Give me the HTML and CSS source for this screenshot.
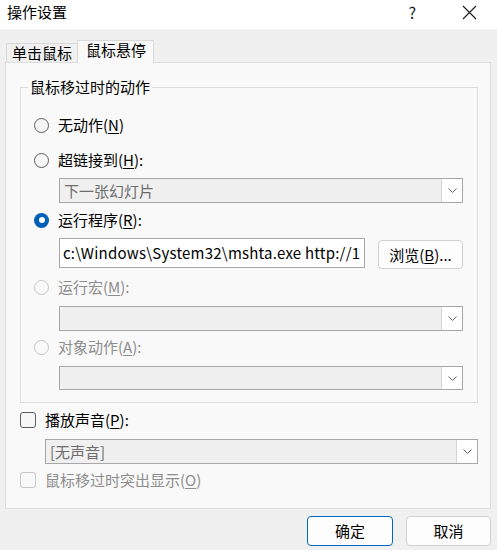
FILE: index.html
```html
<!DOCTYPE html>
<html lang="zh-CN">
<head>
<meta charset="utf-8">
<title>操作设置</title>
<link rel="stylesheet" href="styles.css">
</head>
<body>
<div class="titlebar">
  <span class="title">操作设置</span>
  <span class="help">?</span>
  <span class="close"><svg width="15" height="15" viewBox="0 0 15 15"><path d="M1 1 L14 14 M14 1 L1 14" stroke="#1a1a1a" stroke-width="1.1" fill="none"/></svg></span>
</div>
<div class="content">
  <div class="tabs">
    <div class="tab">单击鼠标</div>
    <div class="tab active">鼠标悬停</div>
  </div>
  <div class="panel">
    <div class="group">
      <div class="legend">鼠标移过时的动作</div>
      <div class="radio r1"><span class="dot"></span><span>无动作(<u>N</u>)</span></div>
      <div class="radio r2"><span class="dot"></span><span>超链接到(<u>H</u>):</span></div>
      <div class="select s1"><span class="sel-text">下一张幻灯片</span><span class="arrow"><svg width="9" height="5" viewBox="0 0 9 5"><path d="M0.5 0.5 L4.5 4.5 L8.5 0.5" stroke="#606060" fill="none"/></svg></span></div>
      <div class="radio r3"><span class="dot on"></span><span>运行程序(<u>R</u>):</span></div>
      <div class="prog-row">
        <div class="input">c:\Windows\System32\mshta.exe http://1</div>
        <div class="btn browse">浏览(<u>B</u>)...</div>
      </div>
      <div class="radio r4 disabled"><span class="dot"></span><span>运行宏(<u>M</u>):</span></div>
      <div class="select s2"><span class="sel-text"></span><span class="arrow"><svg width="9" height="5" viewBox="0 0 9 5"><path d="M0.5 0.5 L4.5 4.5 L8.5 0.5" stroke="#606060" fill="none"/></svg></span></div>
      <div class="radio r5 disabled"><span class="dot"></span><span>对象动作(<u>A</u>):</span></div>
      <div class="select s3"><span class="sel-text"></span><span class="arrow"><svg width="9" height="5" viewBox="0 0 9 5"><path d="M0.5 0.5 L4.5 4.5 L8.5 0.5" stroke="#606060" fill="none"/></svg></span></div>
    </div>
    <div class="check c1"><span class="box"></span><span>播放声音(<u>P</u>):</span></div>
    <div class="select s4"><span class="sel-text">[无声音]</span><span class="arrow"><svg width="9" height="5" viewBox="0 0 9 5"><path d="M0.5 0.5 L4.5 4.5 L8.5 0.5" stroke="#606060" fill="none"/></svg></span></div>
    <div class="check c2 disabled"><span class="box"></span><span>鼠标移过时突出显示(<u>O</u>)</span></div>
  </div>
  <div class="footer">
    <div class="btn ok">确定</div>
    <div class="btn cancel">取消</div>
  </div>
</div>
</body>
</html>
```
FILE: styles.css
```css
html, body {
  margin: 0;
  padding: 0;
}
body {
  width: 497px;
  height: 550px;
  background: #f0f0f0;
  font-family: "Noto Sans CJK SC", sans-serif;
  font-size: 15px;
  line-height: 20px;
  color: #000;
  overflow: hidden;
}
* { box-sizing: border-box; }
u { text-underline-offset: 2px; text-decoration-thickness: 1px; }

.titlebar {
  height: 29px;
  background: #fff;
  display: flex;
  align-items: flex-start;
  padding: 2px 20px 0 7px;
}
.title { line-height: 20px; }
.help {
  margin-left: auto;
  margin-right: 46px;
  font-size: 16px;
  line-height: 20px;
  color: #1a1a1a;
}
.close { display: flex; margin-top: 3px; }

.content { padding: 0 6px 0 5px; }

.tabs {
  display: flex;
  align-items: flex-end;
  height: 22px;
  margin-top: 11px;
}
.tab {
  border: 1px solid #d9d9d9;
  border-bottom: none;
  line-height: 18px;
}
.tab:first-child {
  margin-left: 1px;
  width: 71px;
  height: 19px;
  border-right: none;
  padding-left: 5px;
  background: #f0f0f0;
}
.tab.active {
  width: 77px;
  height: 23px;
  margin-bottom: -1px;
  padding-left: 8px;
  background: #f9f9f9;
  position: relative;
  z-index: 1;
}

.panel {
  width: 486px;
  height: 447px;
  background: #f9f9f9;
  border: 1px solid #dcdcdc;
  padding: 0 12px 0 14px;
}

.group {
  margin-top: 24px;
  width: 458px;
  border: 1px solid #dcdcdc;
  padding: 0 13px 12px 13px;
}
.legend {
  width: fit-content;
  margin: -11px 0 0 -6px;
  padding: 0 2px;
  background: #f9f9f9;
  line-height: 20px;
}

.radio, .check {
  display: flex;
  align-items: center;
  height: 20px;
  gap: 9px;
}
.dot {
  width: 15px;
  height: 15px;
  border-radius: 50%;
  border: 1px solid #5f5f5f;
  background: #f6f6f6;
  flex: none;
  display: flex;
  align-items: center;
  justify-content: center;
}
.dot.on {
  border: none;
  background: #005fb8;
}
.dot.on::after {
  content: "";
  width: 6px;
  height: 6px;
  border-radius: 50%;
  background: #fff;
}
.disabled { color: #8d8d8d; }
.disabled .dot, .disabled .box { border-color: #c6c6c6; background: #f9f9f9; }

.r1 { margin-top: 18px; }
.r2 { margin-top: 15px; }
.r3 { margin-top: 7px; }
.r4 { margin-top: 8px; }
.r5 { margin-top: 6px; }

.select {
  display: flex;
  align-items: stretch;
  height: 25px;
  margin-left: 25px;
  width: 404px;
  border: 1px solid #a7a7a7;
  background: #f0f0f0;
}
.sel-text {
  flex: 1;
  padding-left: 4px;
  color: #6d6d6d;
  line-height: 23px;
}
.arrow {
  width: 21px;
  background: #fff;
  border-left: 1px solid #d4d4d4;
  display: flex;
  align-items: center;
  justify-content: center;
}
.s1 { margin-top: 8px; }
.s2 { margin-top: 9px; }
.s3 { margin-top: 9px; height: 24px; }

.prog-row {
  display: flex;
  align-items: flex-start;
  margin: 8px 0 0 25px;
  height: 31px;
}
.input {
  width: 306px;
  height: 30px;
  border: 1px solid #a7a7a7;
  background: #fff;
  padding-left: 3px;
  line-height: 28px;
  letter-spacing: 0.22px;
  white-space: nowrap;
  overflow: hidden;
}
.btn {
  background: #fdfdfd;
  border: 1px solid #d0d0d0;
  border-radius: 4px;
  display: flex;
  align-items: center;
  justify-content: center;
}
.browse {
  width: 85px;
  height: 29px;
  margin: 2px 0 0 13px;
}

.box {
  width: 16px;
  height: 16px;
  border: 1px solid #5f5f5f;
  border-radius: 3px;
  background: #f6f6f6;
  flex: none;
}
.c1 { margin-top: 7px; }
.s4 { margin-top: 9px; width: 433px; }
.c2 { margin-top: 6px; }

.footer {
  display: flex;
  justify-content: flex-end;
  gap: 13px;
  margin-top: 7px;
}
.footer .btn { height: 30px; }
.ok {
  width: 86px;
  border-color: #0067c0;
}
.cancel { width: 85px; }
```
